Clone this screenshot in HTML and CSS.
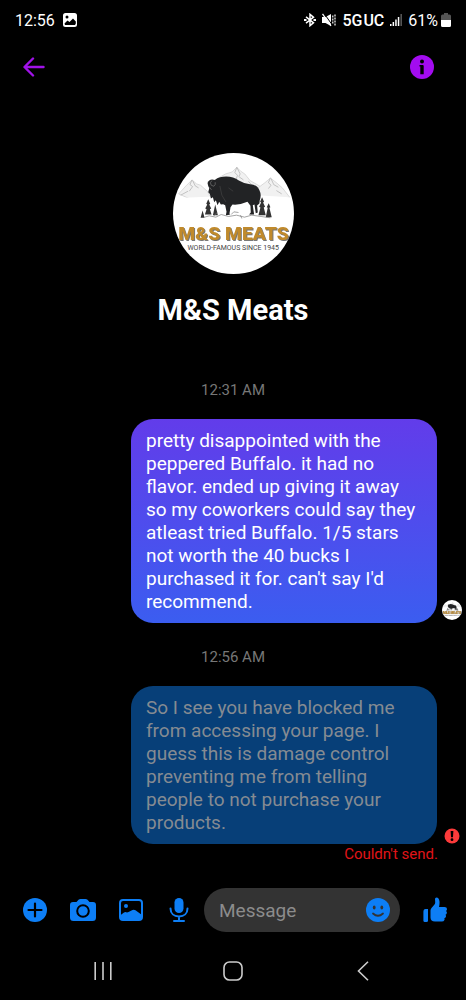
FILE: index.html
```html
<!DOCTYPE html>
<html lang="en">
<head>
  <meta charset="utf-8">
  <meta name="viewport" content="width=device-width, initial-scale=1">
  <title>M&amp;S Meats</title>
  <link rel="stylesheet" href="styles.css">
</head>
<body>

  <div class="status-bar">
    <span class="clock">12:56</span>
    <svg class="status-picture" width="14" height="14" viewBox="0 0 14 14">
      <path fill="#fff" fill-rule="evenodd" d="M2.500 0h9A2.500 2.500 0 0 1 14 2.500v9a2.500 2.500 0 0 1-2.500 2.500h-9A2.500 2.500 0 0 1 0 11.500v-9A2.500 2.500 0 0 1 2.500 0zM1.500 10.500l.5 1.500h10l.8-1.500V8.500L10 5.500 6.500 9 4.500 7.500zM4 2.500a1.500 1.500 0 1 0 0 3 1.500 1.500 0 0 0 0-3z"/>
    </svg>
    <div class="status-right">
      <svg width="12" height="14" viewBox="0 0 12 14" fill="none" stroke="#fff" stroke-width="1.500">
        <path d="M2 3.800L9.500 9.800 6 12.700V1.300L9.500 4.200 2 10.200"/>
        <path d="M0 7h2.500M9.500 7H12" stroke-width="2"/>
      </svg>
      <svg class="mute" width="14" height="14" viewBox="0 0 14 14">
        <path fill="#fff" d="M0 4h3.500L9 1v12L3.500 10H0z"/>
        <path fill="none" stroke="#000" stroke-width="1" d="M1.800 0l8.500 12"/>
        <path fill="none" stroke="#fff" stroke-width="1.300" d="M.5 .8l8.500 12.200"/>
        <path fill="none" stroke="#fff" stroke-width="1.200" stroke-dasharray="2 1" d="M10.800 2.500v9M13 1.500v11"/>
      </svg>
      <span class="network">5G</span><span class="network carrier">UC</span>
      <svg class="signal" width="12" height="14" viewBox="0 0 12 14" fill="#fff">
        <path d="M0 11h1.500v2H0zM2.600 9h1.500v4H2.600zM5.200 6.500h1.500V13H5.200zM7.800 4h1.500v9H7.800z"/>
        <path fill="#555" d="M10.400 1H12v12h-1.600z"/>
      </svg>
      <span class="battery-level">61%</span>
      <svg width="10" height="14" viewBox="0 0 10 14">
        <path fill="#555" d="M3 0h4v1.500h1.500A1.500 1.500 0 0 1 10 3v4H0V3a1.500 1.500 0 0 1 1.500-1.500H3z"/>
        <path fill="#fff" d="M0 7h10v5.500A1.500 1.500 0 0 1 8.500 14h-7A1.500 1.500 0 0 1 0 12.500z"/>
      </svg>
    </div>
  </div>

  <header class="top-bar">
    <button type="button" aria-label="Back">
      <svg width="22" height="20" viewBox="0 0 22 20" fill="none" stroke="#a012e8" stroke-width="2.400" stroke-linecap="round" stroke-linejoin="round">
        <path d="M20.500 10H2M10 1.500L1.500 10l8.500 8.500"/>
      </svg>
    </button>
    <button type="button" aria-label="Info">
      <svg width="24" height="24" viewBox="0 0 24 24">
        <circle cx="12" cy="12" r="12" fill="#a30cf0"/>
        <circle cx="12" cy="6.500" r="2" fill="#000"/>
        <path fill="#000" d="M9.500 10h3.300q.9 0 .9 1v8.300h-3.400V11.500h-.8z"/>
      </svg>
    </button>
  </header>

  <main>
    <section class="profile">
      <svg class="avatar" viewBox="23 23 364 364" role="img" aria-label="M&amp;S Meats logo">
        <g id="logo">
          <circle cx="205" cy="205" r="182" fill="#fff"/>
          <g fill="#f1f1f1" stroke="#ccc" stroke-width="2" stroke-linejoin="round">
            <path d="M146 106l35-20 20-6 14-14 12 12 12 8 16 20 28 16 30 26-50 20H140z"/>
            <path d="M40 146l22-24 18-18 14 12 12 4 20 18 20 34-40-6-30-4z"/>
            <path d="M276 130l24-18 16-14 20 16 16 14 22 28-30 10-50 4z"/>
          </g>
          <path fill="none" stroke="#aaa" stroke-width="2" d="M215 66l-6 16 8 8-4 12M215 66l10 20-4 8 14 10M80 104l-6 14 8 6-10 14M82 106l8 16 10 6M316 98l-6 14 8 8-8 10M318 100l8 18 14 8M46 150l22-12M350 146l-16-10M250 108l12 14 14 4"/>
          <path fill="#fff" d="M36 158l110-4 130-4 98 6v60H36z"/>
          <path fill="#333" d="M129 162l6 14-3 2 6 12-4 2 5 16h-20l5-16-4-2 6-12-3-2zM112 196l6 22h-12zM150 178l8 32h-15zM291 156l6 14-3 2 6 13-4 2 6 23h-22l6-23-4-2 6-13-3-2zM311 174l5 12-3 2 7 28h-18l6-28-3-2z"/>
          <path fill="none" stroke="#777" stroke-width="2" d="M118 216l14-4 20 4 16-8 22 6 24-4 24 6 22-6 28 4 28 4M146 212l10-10M198 208l8-8 14 2M226 210l4 10"/>
          <path fill="#222325" d="M127 113q3-9 14-10l8 1q14-10 34-10 22 0 38 12 14 9 34 11 22 2 28 18 7 14 1 30l-1 10-7 6 2 21-6 2-4-26-5 2 4 28h-15l5-6-1-20-9-12q-22 10-45 8l-6 8-3 18 1 5-12 1 2-10-4-20-6-3-7 1-5-8-5 10-5-15-5 6-4-15-6 4-3-14-5-5 3-12-3-7q-3-8-2-15z"/>
          <path fill="none" stroke="#777" stroke-width="2" d="M140 106q-8 6-2 14l8 3q6-5 4-12M133 126l6 8"/>
          <path fill="none" stroke="#444" stroke-width="2" d="M164 122l6 28 12 20M190 128l14 10"/>
          <text class="logo-name" x="205" y="284" text-anchor="middle">M&amp;S MEATS</text>
          <text class="logo-tag" x="204" y="316" text-anchor="middle">WORLD-FAMOUS SINCE 1945</text>
        </g>
      </svg>
      <h1>M&amp;S Meats</h1>
    </section>

    <section class="thread">
      <time class="stamp">12:31 AM</time>
      <div class="row">
        <p class="bubble">pretty disappointed with the peppered Buffalo. it had no flavor. ended up giving it away so my coworkers could say they atleast tried Buffalo. 1/5 stars not worth the 40 bucks I purchased it for. can't say I'd recommend.</p>
        <span class="receipt seen">
          <svg width="20" height="20" viewBox="23 23 364 364" aria-hidden="true"><use href="#logo"/></svg>
        </span>
      </div>

      <time class="stamp">12:56 AM</time>
      <div class="row">
        <p class="bubble failed">So I see you have blocked me from accessing your page. I guess this is damage control preventing me from telling people to not purchase your products.</p>
        <span class="receipt">
          <svg width="16" height="16" viewBox="0 0 16 16">
            <circle cx="8" cy="8" r="7.500" fill="#fb3a3a"/>
            <path fill="#000" d="M6.600 3h2.800L9 9.200H7z"/>
            <circle cx="8" cy="11.700" r="1.400" fill="#000"/>
          </svg>
        </span>
      </div>
      <p class="error">Couldn't send.</p>
    </section>
  </main>

  <form class="composer">
    <div class="actions">
      <button type="button" aria-label="More">
        <svg width="24" height="24" viewBox="0 0 24 24">
          <circle cx="12" cy="12" r="12" fill="#0d7ef5"/>
          <path d="M12 5.500v13M5.500 12h13" stroke="#000" stroke-width="2.200" stroke-linecap="round"/>
        </svg>
      </button>
      <button type="button" aria-label="Camera">
        <svg width="26" height="22" viewBox="0 0 26 22">
          <path fill="#0d7ef5" d="M3 3h3.500l2-2.200Q9.300 0 10.500 0h5q1.200 0 2 .8l2 2.200H23q3 0 3 3v12.500q0 3.500-3.500 3.500h-19Q0 22 0 18.500V6q0-3 3-3z"/>
          <circle cx="13" cy="12" r="5.800" fill="#0d7ef5" stroke="#000" stroke-width="2"/>
        </svg>
      </button>
      <button type="button" aria-label="Photos">
        <svg width="24" height="22" viewBox="0 0 24 22">
          <rect x="1" y="1" width="22" height="20" rx="3" fill="none" stroke="#0d7ef5" stroke-width="2"/>
          <circle cx="7" cy="7" r="2" fill="#0d7ef5"/>
          <path fill="#0d7ef5" d="M1 16.500l4-3q1.500-1 3 0l1.500-.5 4-2q1.500-.8 3 .2L23 16v2q0 3-3 3H4q-3 0-3-3z"/>
        </svg>
      </button>
      <button type="button" aria-label="Voice message">
        <svg width="20" height="24" viewBox="0 0 20 24">
          <rect x="5.500" y="0" width="9" height="15" rx="4.500" fill="#0d7ef5"/>
          <path fill="none" stroke="#0d7ef5" stroke-width="2" stroke-linecap="round" d="M1.500 10.500c0 5 3.500 8 8.500 8s8.500-3 8.500-8M10 18.500v4M5 23h10"/>
        </svg>
      </button>
    </div>
    <div class="field">
      <input type="text" placeholder="Message" aria-label="Message">
      <button type="button" aria-label="Emoji">
        <svg width="24" height="24" viewBox="0 0 24 24">
          <circle cx="12" cy="12" r="12" fill="#0d7ef5"/>
          <ellipse cx="8.200" cy="9.500" rx="1.400" ry="1.900" fill="#333"/>
          <ellipse cx="15.800" cy="9.500" rx="1.400" ry="1.900" fill="#333"/>
          <path fill="none" stroke="#333" stroke-width="1.800" stroke-linecap="round" d="M7 15.500q5 4.500 10 0"/>
        </svg>
      </button>
    </div>
    <button class="like" type="button" aria-label="Like">
      <svg width="24" height="26" viewBox="0 0 24 26" fill="#0d7ef5">
        <path d="M2.500 12H5v11.500q0 1.500-1.500 1.500H1.800Q.4 25 .4 23.500V15q0-3 2.100-3z"/>
        <path d="M7.500 13.500q0-1.500 1-2.500l3-3.500q.8-1 .7-2.500L12 2q0-1.500 1.500-1.500 2.500 0 3 4 .2 2.500-.5 5.500h5.500q2.500 0 2.500 2 0 1.300-1 2 1.200.8.800 2.200-.3 1.200-1.300 1.500.8 1 .4 2-.4 1.200-1.600 1.500.5.900.1 1.800-.6 1.500-2.600 1.500H12q-4.500 0-4.500-4z"/>
      </svg>
    </button>
  </form>

  <nav class="system-nav">
    <button type="button" aria-label="Recent apps">
      <svg width="18" height="18" viewBox="0 0 18 18" stroke="#ccc" stroke-width="1.600"><path d="M1.200 0v18M9 0v18M16.800 0v18"/></svg>
    </button>
    <button type="button" aria-label="Home">
      <svg width="20" height="20" viewBox="0 0 20 20"><rect x="1" y="1" width="18" height="18" rx="5.500" fill="none" stroke="#ccc" stroke-width="1.600"/></svg>
    </button>
    <button type="button" aria-label="Back">
      <svg width="12" height="20" viewBox="0 0 12 20" fill="none" stroke="#ccc" stroke-width="1.600"><path d="M11 .8L1.500 10l9.500 9.200"/></svg>
    </button>
  </nav>

</body>
</html>
```
FILE: styles.css
```css
* {
  box-sizing: border-box;
}

body {
  display: flex;
  flex-direction: column;
  min-height: 100vh;
  margin: 0;
  background: #000;
  color: #fff;
  font-family: Roboto, "Liberation Sans", sans-serif;
}

h1, p {
  margin: 0;
}

svg {
  display: block;
}

button {
  display: flex;
  align-items: center;
  justify-content: center;
  padding: 0;
  border: none;
  background: none;
  cursor: pointer;
}

.status-bar {
  display: flex;
  align-items: center;
  height: 40px;
  padding: 0 15px;
  font-size: 16px;
}

.status-picture {
  margin-left: 8px;
}

.status-right {
  display: flex;
  align-items: center;
  margin-left: auto;
}

.mute {
  margin: 0 6px;
}

.network {
  font-weight: 500;
}

.carrier {
  margin-left: 1px;
}

.signal {
  margin: 0 6px;
}

.battery-level {
  margin-right: 3px;
}

.top-bar {
  display: flex;
  justify-content: space-between;
  align-items: center;
  height: 54px;
  padding: 0 32px 0 23px;
}

main {
  flex: 1;
}

.profile {
  display: flex;
  flex-direction: column;
  align-items: center;
  padding: 59px 16px 54px;
}

.avatar {
  width: 121px;
  height: 121px;
}

.logo-name {
  font-size: 58px;
  font-weight: 900;
  fill: #c08a2c;
  filter: drop-shadow(3px 3px 0 #777);
}

.logo-tag {
  font-size: 21px;
  fill: #444;
}

h1 {
  margin-top: 20px;
  font-size: 29px;
  line-height: 32px;
  font-weight: 700;
}

.thread {
  display: flex;
  flex-direction: column;
}

.stamp {
  color: #777;
  font-size: 15px;
  line-height: 20px;
  text-align: center;
}

.row {
  display: flex;
  justify-content: flex-end;
  align-items: flex-end;
  gap: 5px;
  margin: 19px 4px 24px;
}

.bubble {
  width: 306px;
  padding: 10px 20px 10px 15px;
  border-radius: 22px;
  background: linear-gradient(#623cea, #3b5df0);
  font-size: 19px;
  line-height: 23px;
}

.bubble.failed {
  background: #073f78;
  color: #858b92;
}

.receipt {
  display: flex;
  justify-content: center;
  width: 20px;
}

.receipt.seen {
  padding-bottom: 3px;
}

.row:last-of-type {
  margin-bottom: 0;
}

.error {
  padding-right: 28px;
  color: #e01418;
  font-size: 15px;
  line-height: 20px;
  text-align: right;
}

.composer {
  display: flex;
  align-items: center;
  padding: 10px 17px 10px 21px;
}

.actions {
  display: flex;
  gap: 20px;
  margin-right: 11px;
}

.actions button,
.like {
  width: 28px;
  height: 28px;
}

.field {
  display: flex;
  flex: 1;
  align-items: center;
  min-width: 0;
  height: 44px;
  margin-right: 21px;
  padding: 0 10px 0 15px;
  border-radius: 22px;
  background: #333;
}

.field input {
  flex: 1;
  min-width: 0;
  padding: 0;
  border: none;
  outline: none;
  background: none;
  color: #fff;
  font-family: inherit;
  font-size: 19px;
}

.field input::placeholder {
  color: #8c8c8c;
}

.system-nav {
  display: flex;
  height: 58px;
  padding: 0 8%;
}

.system-nav button {
  flex: 1;
}
```
